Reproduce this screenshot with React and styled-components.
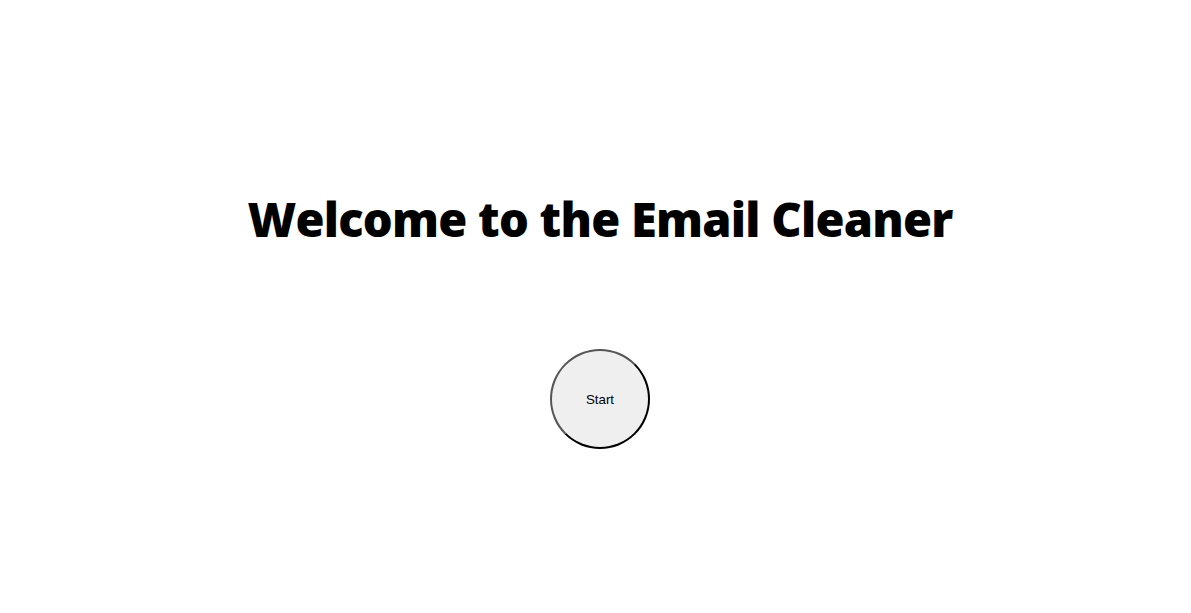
import React from "react";
import styled, { createGlobalStyle } from "styled-components";

const GlobalStyle = createGlobalStyle`
body {
    margin: 0;
    background: #ffffff;
    font-family: "Liberation Sans", Arial, sans-serif;
}
`

export default function App(){
    return(
        <Page>
            <GlobalStyle />
            <Title>Welcome to the Email Cleaner</Title>
            <StartButton>Start</StartButton>
        </Page>
    )
}

const Page = styled.div`
display: flex;
flex-direction: column;
align-items: center;
padding-top: 189px;
padding-left: 9px;
gap: 100px;
`

const Title = styled.h1`
margin: 0;
font-family: "Open Sans", sans-serif;
font-weight: 800;
font-size: 47px;
letter-spacing: -0.75px;
line-height: 60px;
color: #000;
`

const StartButton = styled.button`
width: 100px;
height: 100px;
border-radius: 50%;
border: 2px outset #555;
border-right-color: #000;
border-bottom-color: #000;
background: #efefef;
font-family: "Liberation Sans", Arial, sans-serif;
font-size: 13.33px;
color: #000;
cursor: pointer;
`
